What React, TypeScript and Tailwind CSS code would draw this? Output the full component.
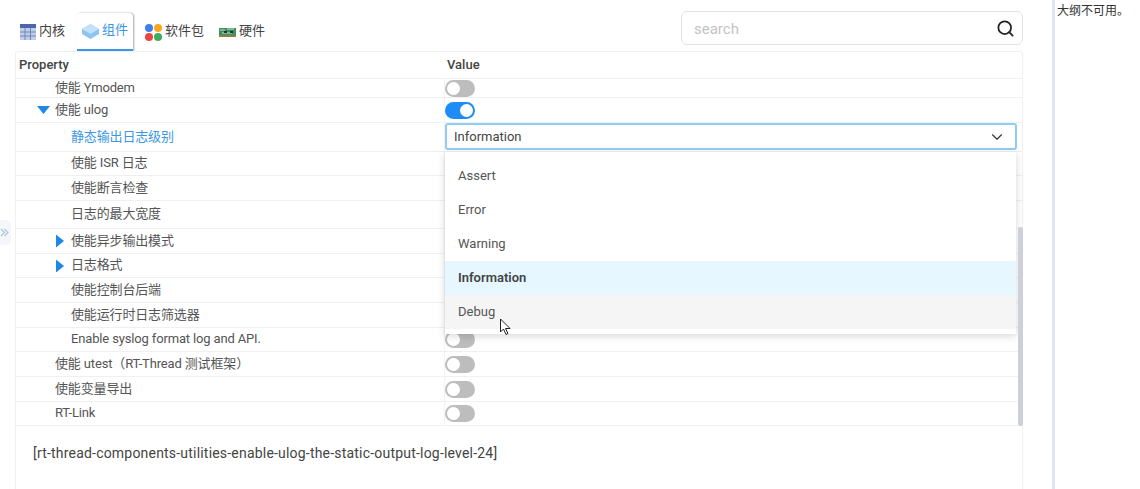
import { ChevronDown, Search } from "lucide-react";

type RowData = {
  label: string;
  indent: 1 | 2;
  height: string;
  caret?: "down" | "right";
  active?: boolean;
  toggle?: "on" | "off";
};

const rows: RowData[] = [
  { label: "使能 Ymodem", indent: 1, height: "h-[19px]", toggle: "off" },
  { label: "使能 ulog", indent: 1, height: "h-[25px]", caret: "down", toggle: "on" },
  { label: "静态输出日志级别", indent: 2, height: "h-[29px]", active: true },
  { label: "使能 ISR 日志", indent: 2, height: "h-[24px]" },
  { label: "使能断言检查", indent: 2, height: "h-[25px]" },
  { label: "日志的最大宽度", indent: 2, height: "h-[28px]" },
  { label: "使能异步输出模式", indent: 2, height: "h-[25px]", caret: "right" },
  { label: "日志格式", indent: 2, height: "h-[24px]", caret: "right" },
  { label: "使能控制台后端", indent: 2, height: "h-[25px]" },
  { label: "使能运行时日志筛选器", indent: 2, height: "h-[25px]" },
  { label: "Enable syslog format log and API.", indent: 2, height: "h-[24px]", toggle: "off" },
  { label: "使能 utest（RT-Thread 测试框架）", indent: 1, height: "h-[25px]", toggle: "off" },
  { label: "使能变量导出", indent: 1, height: "h-[25px]", toggle: "off" },
  { label: "RT-Link", indent: 1, height: "h-[24px]", toggle: "off" },
];

function Toggle({ on }: { on: boolean }) {
  return (
    <div className={`w-[30px] h-[17px] rounded-full p-[2px] flex ${on ? "bg-[#1e8cf5] justify-end" : "bg-[#bdbdbd] justify-start"}`}>
      <div className="w-[13px] h-[13px] rounded-full bg-white" />
    </div>
  );
}

function Row({ row }: { row: RowData }) {
  return (
    <div className={`${row.height} flex border-b border-[#f0f0f0] text-[13px] leading-none`}>
      <div className={`w-[428px] shrink-0 flex items-center relative pb-[2px] tracking-[-0.15px] ${row.indent === 1 ? "pl-[39px]" : "pl-[55px]"} ${row.active ? "text-[#3b97e3]" : "text-[#555555]"}`}>
        {row.caret === "down" && (
          <svg className="absolute left-[21px] top-1/2 -translate-y-1/2" width="13" height="8" viewBox="0 0 13 8">
            <path d="M0 0h13L6.500 8z" fill="#1e88e5" />
          </svg>
        )}
        {row.caret === "right" && (
          <svg className="absolute left-[40px] top-1/2 -translate-y-1/2" width="8" height="13" viewBox="0 0 8 13">
            <path d="M0 0l8 6.500L0 13z" fill="#1e88e5" />
          </svg>
        )}
        <span className="whitespace-nowrap">{row.label}</span>
      </div>
      <div className="flex-1 flex items-center border-l border-[#f3f3f3]">
        {row.toggle && <Toggle on={row.toggle === "on"} />}
      </div>
    </div>
  );
}

function TabIcon({ name }: { name: "table" | "cube" | "apps" | "board" }) {
  if (name === "table") {
    return (
      <svg width="16" height="16" viewBox="0 0 16 16">
        <rect width="16" height="16" fill="#c3cde6" />
        <rect width="16" height="4" fill="#4a67ad" />
        <path d="M0 8h16M0 12h16M5 4v12M10.500 4v12" stroke="#6f86bd" strokeWidth="1" />
      </svg>
    );
  }
  if (name === "cube") {
    return (
      <svg width="17" height="15" viewBox="0 0 17 15">
        <path d="M8.500 0L17 5v5l-8.500 5L0 10V5z" fill="#8cc4f2" />
        <path d="M8.500 0L17 5l-8.500 5L0 5z" fill="#c2e1fa" />
      </svg>
    );
  }
  if (name === "apps") {
    return (
      <svg width="17" height="17" viewBox="0 0 17 17">
        <circle cx="4" cy="4" r="4" fill="#3f7fe8" />
        <circle cx="13" cy="4" r="4" fill="#f5a623" />
        <circle cx="4" cy="13" r="4" fill="#e8483f" />
        <circle cx="13" cy="13" r="4" fill="#3dae5b" />
      </svg>
    );
  }
  return (
    <svg width="17" height="12" viewBox="0 0 17 12">
      <path d="M0 2h17v7H0z" fill="#3f8f63" />
      <path d="M1 4h5M8 3h7M3 7h10" stroke="#b8e0c4" strokeWidth="1" />
      <path d="M5 5h3v2H5zM11 5h3v2h-3z" fill="#23343a" />
      <rect y="9" width="17" height="2" fill="#8f7f3c" />
    </svg>
  );
}

function Tab({ icon, label, active, className = "" }: { icon: "table" | "cube" | "apps" | "board"; label: string; active?: boolean; className?: string }) {
  return (
    <div
      className={`h-[38px] flex items-center gap-[3px] px-[5px] text-[13px] ${className} ${
        active
          ? "rounded-t-[4px] border-b-2 border-[#3b97e3] text-[#3b97e3] shadow-[1px_0_2px_rgba(0,0,0,0.35)]"
          : "text-[#444444]"
      }`}
    >
      <TabIcon name={icon} />
      <span className="pb-[2px]">{label}</span>
    </div>
  );
}

const options = ["Assert", "Error", "Warning", "Information", "Debug"];

export default function App() {
  return (
    <div className="w-[1140px] h-[489px] flex overflow-hidden bg-white font-['Roboto','Noto_Sans_CJK_SC',sans-serif] relative">
      <div className="w-[1052px] shrink-0 pl-[15px] relative">
        <div className="w-[1008px] h-[51px] flex items-end justify-between">
          <div className="flex items-center gap-[6px]">
            <Tab icon="table" label="内核" className="mr-[1px]" />
            <Tab icon="cube" label="组件" active className="mr-[1px]" />
            <Tab icon="apps" label="软件包" className="-mr-[1px]" />
            <Tab icon="board" label="硬件" />
          </div>
          <div className="w-[342px] h-[34px] mb-[6px] border border-[#e2e2e2] rounded-[6px] flex items-center justify-between pl-[12px] pr-[7px]">
            <span className="text-[15px] text-[#c4c4c4] pt-[2px]">search</span>
            <Search size={19} strokeWidth={2.25} className="text-[#222222]" />
          </div>
        </div>

        <div className="w-[1008px] h-[438px] border border-b-0 border-[#f0f0f0] rounded-t-[4px] relative">
          <div className="h-[27px] flex items-center border-b border-[#f0f0f0] text-[13px] font-medium text-[#444444]">
            <div className="w-[428px] pl-[3px] shrink-0">Property</div>
            <div className="pl-[3px]">Value</div>
          </div>
          {rows.map((row) => (
            <Row key={row.label} row={row} />
          ))}
          <div className="pl-[17px] pt-[17px] text-[14px] tracking-[0.2px] text-[#444444]">
            [rt-thread-components-utilities-enable-ulog-the-static-output-log-level-24]
          </div>

          {/* open select and its menu */}
          <div className="absolute left-[429px] top-[71px] w-[572px] h-[27px] border-2 border-[#90cdf4] rounded-[3px] bg-white flex items-center justify-between pl-[7px] pr-[9px] text-[13px] text-[#444444]">
            <span>Information</span>
            <ChevronDown size={18} strokeWidth={1.5} className="text-[#333333]" />
          </div>
          <div className="absolute left-[429px] top-[100px] w-[571px] h-[182px] bg-white pt-[7px] shadow-[0_2px_8px_rgba(0,0,0,0.16)] text-[13px] text-[#555555]">
            {options.map((option) => (
              <div
                key={option}
                className={`h-[34px] flex items-center pl-[13px] ${
                  option === "Information" ? "bg-[#e6f7ff] font-semibold text-[#444444]" : option === "Debug" ? "bg-[#f5f5f5]" : ""
                }`}
              >
                {option}
              </div>
            ))}
          </div>
          <div className="absolute left-[1002px] top-[175px] w-[5px] h-[199px] rounded-[2px] bg-[#cdd0da]" />
        </div>

        {/* mouse pointer */}
        <svg className="absolute left-[499px] top-[318px]" width="13" height="18" viewBox="0 0 13 18">
          <path d="M1.500 1v13l3-3 2.500 5.500 2-1L6.500 10.500H11z" fill="#ffffff" stroke="#222222" strokeWidth="1" />
        </svg>

        <div className="absolute left-0 top-[220px] w-[11px] h-[25px] bg-[#f5f6f9] rounded-r-[5px] flex items-center pl-0">
          <svg width="9" height="9" viewBox="0 0 9 9" fill="none" stroke="#a9c6e6" strokeWidth="1.200">
            <path d="M1 1l3.500 3.500L1 8M4.500 1L8 4.500 4.500 8" />
          </svg>
        </div>
      </div>

      <div className="w-[3px] shrink-0 bg-[#dfe5f7]" />
      <div className="flex-1 pl-[2px] pt-[3px] text-[12px] leading-[16px] text-[#333333]">大纲不可用。</div>
    </div>
  );
}
